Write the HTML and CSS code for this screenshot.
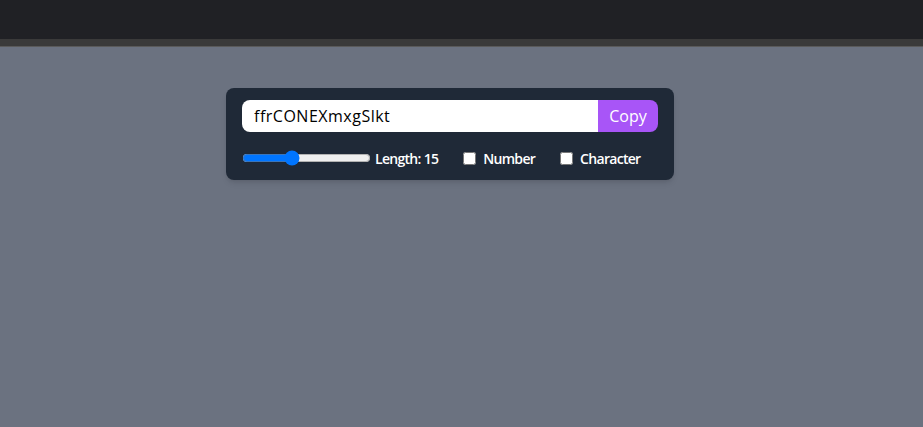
FILE: index.html
```html
<!DOCTYPE html>
<html>
<head>
<meta charset="utf-8">
<link rel="stylesheet" href="styles.css">
</head>
<body>
<div class="topbar"></div>
<div class="subbar"></div>
<main class="page">
  <div class="card">
    <div class="field-row">
      <input class="password" type="text" value="ffrCONEXmxgSlkt" readonly>
      <button class="copy">Copy</button>
    </div>
    <div class="options">
      <div class="option option-range">
        <input class="range" type="range" min="0" max="40" value="15">
        <label>Length: 15</label>
      </div>
      <div class="option">
        <input class="check" type="checkbox" id="num">
        <label for="num">Number</label>
      </div>
      <div class="option">
        <input class="check" type="checkbox" id="chr">
        <label for="chr">Character</label>
      </div>
    </div>
  </div>
</main>
</body>
</html>
```
FILE: styles.css
```css
html, body {
  margin: 0;
  padding: 0;
  height: 100%;
}
body {
  background: #6b7280;
  font-family: "Open Sans", "Noto Sans", sans-serif;
  display: flex;
  flex-direction: column;
}
.topbar {
  height: 39px;
  background: #202125;
}
.subbar {
  height: 7px;
  background: #3a3a3a;
  border-bottom: 1px solid #5a5a5a;
}
.page {
  flex: 1;
  padding-top: 41px;
  padding-left: 226px;
}
.card {
  width: 448px;
  box-sizing: border-box;
  background: #1f2937;
  border-radius: 8px;
  padding: 12px 16px;
  box-shadow: 0 4px 6px -1px rgba(0,0,0,0.1), 0 2px 4px -2px rgba(0,0,0,0.1);
}
.field-row {
  display: flex;
  height: 32px;
  margin-bottom: 16px;
  border-radius: 8px;
  overflow: hidden;
}
.password {
  flex: 1;
  min-width: 0;
  border: none;
  outline: none;
  margin: 0;
  padding: 4px 12px;
  font-family: inherit;
  font-size: 16px;
  letter-spacing: 0.5px;
  color: #000;
  background: #fff;
}
.copy {
  width: 60px;
  border: none;
  margin: 0;
  padding: 0;
  background: #a855f7;
  color: #fff;
  font-family: inherit;
  font-size: 16px;
}
.options {
  display: flex;
  align-items: center;
  height: 20px;
  gap: 21px;
  font-size: 14px;
  font-weight: 600;
  letter-spacing: -0.7px;
  color: #fff;
}
.option {
  display: flex;
  align-items: center;
  gap: 3px;
}
.range {
  width: 129px;
  margin: 0 1px 0 0;
}
.check {
  width: 13px;
  height: 13px;
  margin: 0 4px 0 4px;
}
```
